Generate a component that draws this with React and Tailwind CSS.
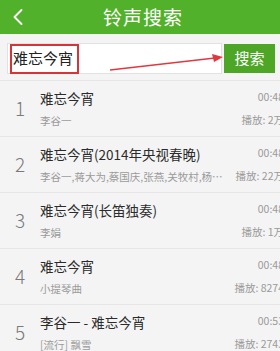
import { ChevronLeft } from 'lucide-react'

const songs = [
  { n: 1, title: '难忘今宵', sub: '李谷一', time: '00:48', plays: '播放: 2万' },
  { n: 2, title: '难忘今宵(2014年央视春晚)', sub: '李谷一,蒋大为,蔡国庆,张燕,关牧村,杨洪基,郁钧剑', time: '00:48', plays: '播放: 22万' },
  { n: 3, title: '难忘今宵(长笛独奏)', sub: '李娟', time: '00:48', plays: '播放: 1万' },
  { n: 4, title: '难忘今宵', sub: '小提琴曲', time: '00:48', plays: '播放: 8274' },
  { n: 5, title: '李谷一 - 难忘今宵', sub: '[流行] 飘雪', time: '00:53', plays: '播放: 2743' },
]

export default function App() {
  return (
    <div
      className="w-[280px] h-[351px] overflow-hidden bg-[#f4f4f4] relative"
      style={{ fontFamily: '"Noto Sans CJK SC", "Noto Sans", sans-serif' }}
    >
      <div className="h-[34px] bg-[#52b12a] flex items-center relative">
        <ChevronLeft className="absolute left-[4px] top-[3px] text-white" size={28} strokeWidth={1.6} />
        <div className="flex-1 text-center text-white text-[19px] tracking-[1px] pl-[6px]">铃声搜索</div>
      </div>

      <div className="flex items-center pl-[7px] pr-[5px] pt-[9px] pb-[6px] gap-[2px]">
        <div className="flex-1 h-[31px] bg-white border border-[#e2e2e2] flex items-center">
          <div className="ml-[2px] h-[30px] w-[69px] border-2 border-[#d9333a] flex items-center pl-[1px] text-[15px] text-[#222]">
            难忘今宵
          </div>
        </div>
        <div className="w-[51px] h-[29px] bg-[#4da626] text-white text-[15px] flex items-center justify-center">
          搜索
        </div>
      </div>

      <svg className="absolute left-0 top-0" width="280" height="80">
        <line x1="110" y1="70" x2="215" y2="58" stroke="#e0383e" strokeWidth="1.5" />
        <polygon points="223,57 212,54 214,62" fill="#e0383e" />
      </svg>

      <div className="w-[287px] border-t border-[#e6e6e6]">
        {songs.map((s) => (
          <div key={s.n} className="h-[56px] flex items-center border-b border-[#e6e6e6]">
            <div className="w-[40px] pl-[15px] text-[19px] text-[#7a7a7a] font-light">{s.n}</div>
            <div className="flex-1 min-w-0 flex flex-col gap-[7px] pr-[6px]">
              <div className="text-[13.5px] text-[#2b2b2b] leading-[18px] truncate">{s.title}</div>
              <div className="text-[10.5px] text-[#9a9a9a] leading-[14px] truncate">{s.sub}</div>
            </div>
            <div className="flex flex-col items-end gap-[9px] pr-[3px] text-[10.5px] text-[#9a9a9a]">
              <div className="leading-[14px]">{s.time}</div>
              <div className="leading-[14px] whitespace-nowrap">{s.plays}</div>
            </div>
          </div>
        ))}
      </div>
    </div>
  )
}
